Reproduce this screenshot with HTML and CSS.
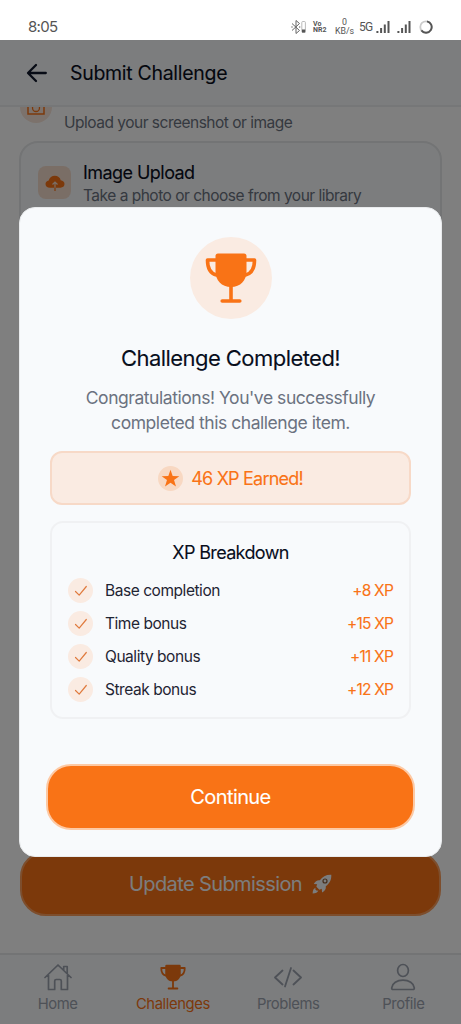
FILE: index.html
```html
<!DOCTYPE html>
<html lang="en">
<head>
<meta charset="utf-8">
<meta name="viewport" content="width=device-width, initial-scale=1">
<title>Submit Challenge</title>
<link rel="stylesheet" href="styles.css">
</head>
<body>
<svg class="defs" aria-hidden="true">
  <symbol id="trophy" viewBox="0 0 52 52">
    <path d="M13 1.500h26q2.500 0 2.500 2.500v15c0 9.500-6 16-15.500 16s-15.500-6.500-15.500-16V4q0-2.500 2.500-2.500z" fill="currentColor"/>
    <path d="M11 8H2.500C2.500 15 5 21.500 11.500 23M41 8h8.500c0 7-2.500 13.500-9 15M26 34v15M17.200 49h17.600" fill="none" stroke="currentColor" stroke-width="3.600" stroke-linecap="round" stroke-linejoin="round"/>
  </symbol>
  <symbol id="check" viewBox="0 0 14 12">
    <path d="M1.500 6.500l3.700 3.700L12.300 1.500" fill="none" stroke="currentColor" stroke-width="1.200" stroke-linecap="round" stroke-linejoin="round"/>
  </symbol>
  <symbol id="signal" viewBox="0 0 14 13">
    <path d="M.4 11h2v2h-2zM4.100 8h2v5h-2zM7.800 4.500h2V13h-2zM11.500 1h2v12h-2z" fill="currentColor"/>
  </symbol>
</svg>
<div class="phone">
  <div class="status">
    <span class="clock">8:05</span>
    <div class="indicators">
      <svg class="bt" viewBox="0 0 16 14"><path d="M1 3.500l7.500 7L5 13.500V.5l3.500 3L1 10.500" fill="none" stroke="#666" stroke-width="1"/><circle cx="1" cy="7" r=".7" fill="#666"/><circle cx="8.700" cy="7" r=".7" fill="#666"/><rect x="10.800" y="1.500" width="3.600" height="11" rx="1" fill="none" stroke="#aaa" stroke-width=".8"/><path d="M11 9.500h3.200v3H11z" fill="#555"/></svg>
      <span class="volte"><b>Vo</b><b>NR2</b></span>
      <span class="speed"><span>0</span><span>KB/s</span></span>
      <span class="net">5G</span>
      <svg class="signal"><use href="#signal"/></svg>
      <svg class="signal second"><use href="#signal"/></svg>
      <svg class="ring" viewBox="0 0 14 14"><circle cx="7" cy="7" r="5.700" fill="none" stroke="#ccc" stroke-width="1.800"/><path d="M8 1.400a5.700 5.700 0 1 1-5.600 9" fill="none" stroke="#555" stroke-width="1.900"/></svg>
    </div>
  </div>
  <div class="app">
    <header class="header">
      <svg class="back" viewBox="0 0 22 20"><path d="M19.800 10H2.500M10 2L2 10l8 8" fill="none" stroke="currentColor" stroke-width="2.300" stroke-linecap="round" stroke-linejoin="round"/></svg>
      <h1>Submit Challenge</h1>
    </header>
    <main class="content">
      <section class="intro">
        <span class="camera"><svg viewBox="0 0 18 16"><path d="M1 3.500h4L6.500 1h5L13 3.500h4V15H1z" fill="none" stroke="currentColor" stroke-width="1.500"/><circle cx="9" cy="9" r="3.500" fill="none" stroke="currentColor" stroke-width="1.300"/></svg></span>
        <p>Upload your screenshot or image</p>
      </section>
      <section class="upload">
        <span class="tile"><svg viewBox="0 0 20 16"><path d="M5 12.700C2.200 12.700.5 11.200.5 9c0-1.900 1.300-3.200 3.200-3.600C4.500 2.500 6.900.8 9.800.8c3 0 5.300 1.700 5.900 4.500 2.200.3 3.800 1.700 3.800 3.800 0 2.300-1.700 3.600-4 3.600z" fill="currentColor"/><path d="M10 12.700V7.500M7.500 9.500L10 7l2.500 2.500" fill="none" stroke="#f5dccc" stroke-width="1.200"/><path d="M10 12.700V16" stroke="currentColor" stroke-width="1.200"/></svg></span>
        <div><h2>Image Upload</h2><p>Take a photo or choose from your library</p></div>
      </section>
      <button class="update"><span>Update Submission</span>
        <svg viewBox="0 0 20 20"><path d="M19.300.7C14 .5 10.500 2.500 7.900 6.200c-2.700-.3-4.700.9-6.100 3.800l3.400.3c-.4.900-.7 1.700-.8 2.400l3 3c.8-.2 1.500-.5 2.300-.9l.4 3.600c2.900-1.500 4.100-3.500 3.700-6.200C17.500 9.600 19.500 6 19.300.7z" fill="currentColor"/><circle cx="13" cy="7" r="2" fill="none" stroke="#8b5a36" stroke-width="1.200"/><path d="M3.600 13.700C1.700 14.300.8 16.200.6 19.400c3.200-.2 5.100-1.100 5.700-3l-1.500.4-1.600-1.600z" fill="currentColor"/></svg>
      </button>
    </main>
    <nav class="tabs">
      <a><svg viewBox="0 0 28 28"><path d="M1 14.500L14 2l13 12.500M4.500 12v14.500h6.200V18q0-1.500 1.500-1.500h3.600q1.500 0 1.500 1.500v8.500h6.200V12M19.700 7V3.500h3.500v7" fill="none" stroke="currentColor" stroke-width="1.700" stroke-linecap="round" stroke-linejoin="round"/></svg><span>Home</span></a>
      <a class="active"><svg viewBox="0 0 28 28"><use href="#trophy" x="1" y="1" width="26" height="26"/></svg><span>Challenges</span></a>
      <a><svg viewBox="0 0 28 28"><path d="M8.500 7.500L1 14.500l7.500 7M19.500 7.500l7.500 7-7.500 7M17 5l-6 18.500" fill="none" stroke="currentColor" stroke-width="1.800" stroke-linecap="round" stroke-linejoin="round"/></svg><span>Problems</span></a>
      <a><svg viewBox="0 0 28 28"><ellipse cx="14" cy="7.500" rx="5.400" ry="6" fill="none" stroke="currentColor" stroke-width="1.700"/><path d="M4.200 26.500h19.600q1.700 0 1.500-1.700c-.6-4.500-5.200-7.600-11.300-7.600S3.300 20.300 2.700 24.800q-.2 1.700 1.500 1.700z" fill="none" stroke="currentColor" stroke-width="1.700"/></svg><span>Profile</span></a>
    </nav>
    <div class="overlay">
      <div class="modal" role="dialog">
        <div class="medal"><svg><use href="#trophy"/></svg></div>
        <h2 class="title">Challenge Completed!</h2>
        <p class="message">Congratulations! You've successfully<br>completed this challenge item.</p>
        <div class="earned">
          <span class="star"><svg viewBox="0 0 20 20"><path d="M10 .8l2.300 6.600 7 .1-5.600 4.200 2.100 6.700L10 14.400l-5.800 4 2.100-6.700L.7 7.500l7-.1z" fill="currentColor"/></svg></span>
          <span>46 XP Earned!</span>
        </div>
        <div class="breakdown">
          <h3>XP Breakdown</h3>
          <ul>
            <li><i><svg><use href="#check"/></svg></i><span>Base completion</span><b>+8 XP</b></li>
            <li><i><svg><use href="#check"/></svg></i><span>Time bonus</span><b>+15 XP</b></li>
            <li><i><svg><use href="#check"/></svg></i><span>Quality bonus</span><b>+11 XP</b></li>
            <li><i><svg><use href="#check"/></svg></i><span>Streak bonus</span><b>+12 XP</b></li>
          </ul>
        </div>
        <button class="continue">Continue</button>
      </div>
    </div>
  </div>
</div>
</body>
</html>
```
FILE: styles.css
```css
* { box-sizing: border-box; margin: 0; padding: 0; }
body { font-family: Inter, "Liberation Sans", sans-serif; color: #0f172a; background: #fff; }
svg { display: block; }
.defs { display: none; }
h1, h2, h3 { font-weight: 400; color: #080e1c; }
h1, h2, h3, .earned, li b, .continue { -webkit-text-stroke: 0.1px currentColor; }
button { font-family: inherit; }
.phone { width: 461px; height: 1024px; display: flex; flex-direction: column; overflow: hidden; }

.status { height: 40px; flex: none; display: flex; justify-content: space-between; padding: 13px 28px 0; color: #555; }
.clock { font-size: 15px; line-height: 27px; letter-spacing: -0.7px; }
.indicators { display: flex; align-items: center; height: 27px; font-family: Roboto, sans-serif; }
.bt { width: 16px; height: 14px; }
.volte { display: flex; flex-direction: column; font-size: 7px; line-height: 6px; margin-left: 6px; width: 15px; }
.speed { display: flex; flex-direction: column; align-items: center; font-size: 8.800px; line-height: 9px; margin-left: 7px; width: 19px; }
.net { font-size: 12px; margin-left: 5px; width: 14px; letter-spacing: -0.8px; }
.signal { width: 14px; height: 13px; margin-left: 3px; }
.second { margin-left: 7px; }
.ring { width: 14px; height: 14px; margin-left: 8px; }

.app { position: relative; flex: 1; display: flex; flex-direction: column; min-height: 0; }
.header { height: 67px; flex: none; display: flex; align-items: center; padding-left: 26px; background: #f8fafc; border-bottom: 2px solid #edeef0; }
.back { width: 22px; height: 20px; }
h1 { font-size: 19.500px; letter-spacing: -0.3px; margin-left: 22px; }
.content { flex: 1; min-height: 0; display: flex; flex-direction: column; padding: 0 20px; overflow: hidden; }
.intro { display: flex; height: 34px; flex: none; }
.camera { width: 32px; height: 32px; margin-top: -16px; border-radius: 50%; background: #f9e5d8; color: #f97316; display: grid; place-items: center; }
.camera svg { width: 18px; height: 16px; }
.intro p, .upload p { color: #6b7280; font-size: 15.500px; letter-spacing: -0.5px; line-height: 20px; }
.intro p { margin: 6px 0 0 12px; }
.upload { height: 110px; flex: none; margin: 0 -1px; padding: 18px 17px; display: flex; gap: 12px; background: #f8fafc; border: 2px solid #e6e8ea; border-radius: 19px; }
.tile { width: 33px; height: 33px; margin-top: 5px; border-radius: 8px; background: #f5dccc; color: #f97316; display: grid; place-items: center; }
.tile svg { width: 20px; height: 16px; }
.upload h2 { font-size: 18px; line-height: 25px; letter-spacing: -0.55px; }
.upload div { margin-top: -1px; }
.upload p { margin-top: 1px; }
.update { height: 65px; flex: none; margin-top: 600px; background: #f97316; border: 2px solid #fb9c5a; border-radius: 26px; color: #f8fafc; display: flex; align-items: center; justify-content: center; gap: 10px; font-size: 20px; letter-spacing: -0.6px; }
.update svg { width: 20px; height: 20px; }
.tabs { height: 71px; flex: none; display: grid; grid-template-columns: repeat(4, 1fr); background: #f8fafc; border-top: 2px solid #e6e8ea; }
.tabs a { display: flex; flex-direction: column; align-items: center; color: #9ca3af; font-size: 14.800px; line-height: 20px; letter-spacing: -0.4px; padding-top: 8px; gap: 3px; }
.tabs svg { width: 28px; height: 28px; }
.tabs .active { color: #f97316; }

.overlay { position: absolute; inset: 0; background: rgba(0, 0, 0, 0.5); padding: 167px 19px 0; }
.modal { height: 650px; background: #f8fafc; border: 1px solid #e9ebed; border-radius: 16px; padding: 29px 26px 0; display: flex; flex-direction: column; align-items: center; }
.medal { width: 82px; height: 82px; flex: none; border-radius: 50%; background: #faebe2; color: #f97316; display: grid; place-items: center; }
.medal svg { width: 52px; height: 52px; }
.title { font-size: 22px; line-height: 30px; letter-spacing: -0.55px; margin-top: 24px; }
.message { color: #6b7280; font-size: 17.500px; line-height: 24.700px; letter-spacing: -0.45px; text-align: center; margin-top: 13px; white-space: nowrap; }
.earned { width: 361px; height: 54px; margin-top: 16px; border: 2px solid #f7d9c7; border-radius: 12px; background: #faebe2; display: flex; align-items: center; justify-content: center; gap: 8px; color: #f97316; font-size: 18px; letter-spacing: -0.8px; }
.star { width: 25px; height: 25px; border-radius: 50%; background: #f8d8c2; display: grid; place-items: center; }
.star svg { width: 19px; height: 19px; }
.breakdown { width: 361px; height: 198px; margin-top: 16px; padding: 18px 16px 0; border: 2px solid #f0f1f3; border-radius: 13px; }
h3 { font-size: 18px; line-height: 24px; letter-spacing: -0.65px; text-align: center; }
ul { list-style: none; margin-top: 9px; }
li { display: flex; align-items: center; height: 32.900px; font-size: 15.500px; letter-spacing: -0.45px; color: #1f2433; }
li i { width: 25px; height: 25px; margin-right: 12px; border-radius: 50%; background: #faebe2; color: #e07a3d; display: grid; place-items: center; }
li i svg { width: 14px; height: 12px; }
li b { margin-left: auto; font-weight: 400; letter-spacing: -0.8px; color: #f97316; }
.continue { width: 369px; height: 66px; margin-top: 45px; border: 2px solid #fdc9a4; border-radius: 25px; background: #f97316; color: #fff; font-size: 20px; letter-spacing: -0.6px; }
```
